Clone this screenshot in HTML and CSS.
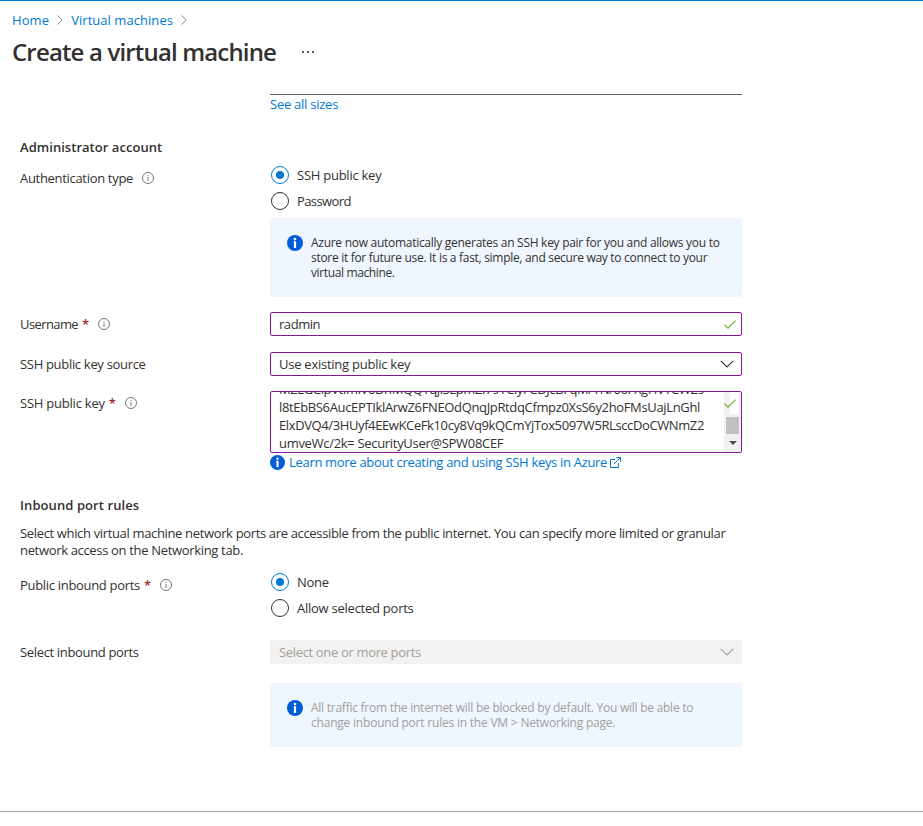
FILE: index.html
```html
<!DOCTYPE html>
<html lang="en">
<head>
<meta charset="utf-8">
<title>Create a virtual machine</title>
<link rel="stylesheet" href="styles.css">
</head>
<body>
<svg class="defs" width="0" height="0" aria-hidden="true">
  <symbol id="info" viewBox="0 0 12 12"><circle cx="6" cy="6" r="5.5" fill="none" stroke="#797775"/><path d="M6 5v4M6 3v1" stroke="#797775" fill="none"/></symbol>
  <symbol id="info-solid" viewBox="0 0 16 16"><circle cx="8" cy="8" r="8" fill="#015cda"/><circle cx="8" cy="4" r="1.3" fill="#fff"/><path d="M6.6 6.8H8" stroke="#fff"/><path d="M8 6.3v6.7" stroke="#fff" stroke-width="2.2"/></symbol>
  <symbol id="chevron" viewBox="0 0 14 8"><path d="M.8 .8 7 7 13.2 .8" fill="none" stroke="currentColor" stroke-width="1.1"/></symbol>
  <symbol id="check" viewBox="0 0 12 9"><path d="M.4 4.6 4 8.1 11.6.6" fill="none" stroke="#6bb12e" stroke-width="1.2"/></symbol>
  <symbol id="crumb" viewBox="0 0 6 10"><path d="M.5.5 5.3 5 .5 9.5" fill="none" stroke="#8a8886"/></symbol>
</svg>
<header class="header">
  <nav class="crumbs">
    <a class="t crumb-home">Home</a><svg class="sep"><use href="#crumb"/></svg>
    <a class="t crumb-vm">Virtual machines</a><svg class="sep"><use href="#crumb"/></svg>
  </nav>
  <div class="title-row"><h1 class="t">Create a virtual machine</h1><span class="more"><i></i><i></i><i></i></span></div>
</header>
<main class="form">
  <div class="row size-row"><div class="field"><div class="cut-field"></div><a class="t see-all">See all sizes</a></div></div>

  <h2 class="t admin-title">Administrator account</h2>
  <div class="row auth-row">
    <div class="label"><span class="t l-auth">Authentication type</span><svg class="info"><use href="#info"/></svg></div>
    <div class="field">
      <div class="radio on"><span class="dot"></span><span class="t r-ssh">SSH public key</span></div>
      <div class="radio"><span class="dot"></span><span class="t r-pass">Password</span></div>
      <div class="note note-key"><svg class="solid"><use href="#info-solid"/></svg>
        <p><span class="t n1">Azure now automatically generates an SSH key pair for you and allows you to</span><span class="t n2">store it for future use. It is a fast, simple, and secure way to connect to your</span><span class="t n3">virtual machine.</span></p></div>
    </div>
  </div>
  <div class="row user-row">
    <div class="label"><span class="t l-user">Username</span><b class="req">*</b><svg class="info"><use href="#info"/></svg></div>
    <div class="field"><div class="box"><span class="t v-user">radmin</span><svg class="check"><use href="#check"/></svg></div></div>
  </div>
  <div class="row source-row">
    <div class="label"><span class="t l-source">SSH public key source</span></div>
    <div class="field"><div class="box"><span class="t v-source">Use existing public key</span><svg class="chev"><use href="#chevron"/></svg></div></div>
  </div>
  <div class="row key-row">
    <div class="label"><span class="t l-key">SSH public key</span><b class="req">*</b><svg class="info"><use href="#info"/></svg></div>
    <div class="field">
      <div class="area">
        <div class="area-text"><span class="t k0">MZLGCipVtImiV0DnMQQTqjlSLpmZI79TClyFCDJcBFqM/YN/06FXgHVTCWZ9</span><span class="t k1">l8tEbBS6AucEPTIklArwZ6FNEOdQnqJpRtdqCfmpz0XsS6y2hoFMsUajLnGhl</span><span class="t k2">ElxDVQ4/3HUyf4EEwKCeFk10cy8Vq9kQCmYjTox5097W5RLsccDoCWNmZ2</span><span class="t k3">umveWc/2k= SecurityUser@SPW08CEF</span></div>
        <div class="scroll"><span class="cover"><svg class="check"><use href="#check"/></svg></span><span class="thumb"></span><span class="down"></span></div>
      </div>
      <div class="learn"><svg class="solid"><use href="#info-solid"/></svg><a class="t learn-text">Learn more about creating and using SSH keys in Azure</a>
        <svg class="ext" viewBox="0 0 11 11"><path d="M5 2.5H.5v8h8V6M6.5.5h4v4M10.3.7 4 7" fill="none" stroke="#0078d4"/></svg></div>
    </div>
  </div>

  <h2 class="t rules-title">Inbound port rules</h2>
  <p class="desc"><span class="t d1">Select which virtual machine network ports are accessible from the public internet. You can specify more limited or granular</span><span class="t d2">network access on the Networking tab.</span></p>
  <div class="row ports-row">
    <div class="label"><span class="t l-ports">Public inbound ports</span><b class="req">*</b><svg class="info"><use href="#info"/></svg></div>
    <div class="field">
      <div class="radio on"><span class="dot"></span><span class="t r-none">None</span></div>
      <div class="radio"><span class="dot"></span><span class="t r-allow">Allow selected ports</span></div>
    </div>
  </div>
  <div class="row select-row">
    <div class="label"><span class="t l-select">Select inbound ports</span></div>
    <div class="field"><div class="box disabled"><span class="t v-select">Select one or more ports</span><svg class="chev"><use href="#chevron"/></svg></div>
      <div class="note note-ports"><svg class="solid"><use href="#info-solid"/></svg>
        <p><span class="t m1">All traffic from the internet will be blocked by default. You will be able to</span><span class="t m2">change inbound port rules in the VM &gt; Networking page.</span></p></div>
    </div>
  </div>
</main>
<footer class="footer"></footer>
</body>
</html>
```
FILE: styles.css
```css
* { box-sizing: border-box; }
body { margin: 0; height: 826px; overflow: hidden; display: flex; flex-direction: column; background: #fff; color: #323130; font: 13px/18px "Open Sans", "Noto Sans", sans-serif; border-top: 1px solid #0078d4; letter-spacing: -0.25px; }
.defs { display: none; }
h1, h2, p { margin: 0; }
svg { flex: none; display: block; }
.t { white-space: nowrap; }
a { color: #0078d4; }
.header { height: 93px; padding: 10px 12px 0; }
.crumbs { display: flex; align-items: center; height: 18px; }
.crumb-home { letter-spacing: 0.1px; }
.crumb-vm { letter-spacing: 0.05px; }
.sep { width: 6px; height: 10px; margin: 0 8px; }
.title-row { display: flex; align-items: center; height: 32px; margin-top: 7px; }
h1 { font-size: 24px; line-height: 32px; font-weight: 600; letter-spacing: -0.84px; width: 290px; }
.more { display: flex; gap: 3px; }
.more i { width: 2px; height: 2px; background: #605e5c; }
.form { flex: 1; padding-left: 20px; }
.row { display: flex; width: 722px; }
.label { width: 250px; height: 24px; display: flex; align-items: center; flex: none; }
.field { width: 472px; }
.size-row { height: 44px; padding-left: 250px; }
.cut-field { height: 1px; background: #605e5c; }
.see-all { display: block; }
h2 { font-size: 13px; line-height: 18px; font-weight: 600; }
.admin-title { letter-spacing: 0.04px; }
.rules-title { letter-spacing: 0.08px; }
.info { width: 12px; height: 12px; margin-left: 9px; }
.req { color: #a4262c; margin-left: 4px; font-weight: 600; width: 7px; }
.l-auth, .l-source, .l-ports { letter-spacing: -0.31px; }
.l-user { letter-spacing: -0.6px; }
.l-key { letter-spacing: -0.22px; }
.l-select, .v-select { letter-spacing: -0.34px; }
.v-user { letter-spacing: -0.45px; }
.r-pass { letter-spacing: -0.6px; }
.auth-row { padding-top: 7px; height: 156px; }
.auth-row .label { height: 30px; }
.radio { height: 26px; display: flex; align-items: center; gap: 8px; padding-left: 1px; margin-top: -4px; }
.auth-row .radio { margin-top: -1px; }
.radio + .radio, .auth-row .radio + .radio { margin-top: 0; }
.dot { width: 18px; height: 18px; border: 1px solid #323130; border-radius: 50%; display: grid; place-items: center; }
.on .dot { border-color: #0078d4; }
.on .dot::after { content: ""; width: 8px; height: 8px; border-radius: 50%; background: #0078d4; }
.note { background: #eff6ff; border-radius: 2px; display: flex; font-size: 12px; line-height: 15px; padding: 17px; margin-top: 4px; }
.note .solid { width: 16px; height: 16px; margin-right: 8px; }
.note p span, .desc span, .area-text span { display: block; }
.n1 { letter-spacing: -0.28px; }
.n2 { letter-spacing: -0.3px; }
.n3 { letter-spacing: -0.37px; }
.m2 { letter-spacing: -0.21px; }
.note-key { height: 79px; }
.user-row { height: 40px; }
.source-row { height: 39px; }
.box { height: 24px; border: 1px solid #881798; border-radius: 2px; display: flex; align-items: center; justify-content: space-between; padding: 0 5px 0 8px; }
.check { width: 12px; height: 9px; }
.chev { width: 14px; height: 8px; margin-right: 2px; }
.area { height: 62px; border: 1px solid #881798; border-radius: 2px; display: flex; justify-content: space-between; overflow: hidden; }
.area-text { padding-left: 8px; margin-top: -12px; }
.k0 { letter-spacing: -0.38px; }
.k1 { letter-spacing: -0.35px; }
.k2 { letter-spacing: -0.39px; }
.k3 { letter-spacing: -0.31px; }
.scroll { width: 17px; background: #f1f1f1; display: flex; flex-direction: column; align-items: center; flex: none; }
.cover { width: 17px; height: 22px; padding-top: 7px; background: linear-gradient(90deg, #f1f1f1 6px, #fff 6px 14px, #f1f1f1 14px); }
.thumb { width: 13px; height: 17px; background: #c1c1c1; margin-top: 3px; }
.down { border: 4px solid transparent; border-top-color: #505050; border-bottom: 0; margin-top: 7px; }
.learn { display: flex; align-items: center; height: 20px; margin-top: -1px; }
.learn-text { letter-spacing: -0.31px; }
.learn .solid { width: 15px; height: 15px; margin-right: 4px; }
.ext { width: 11px; height: 11px; margin-left: 3px; }
.key-row { height: 105px; }
.desc { line-height: 17px; margin-top: 11px; }
.d1 { letter-spacing: -0.346px; }
.d2 { letter-spacing: -0.33px; }
.ports-row { height: 81px; padding-top: 14px; }
.note-ports { margin-top: 19px; height: 64px; color: #a19f9d; }
.disabled { background: #f3f2f1; border-color: #f3f2f1; color: #a19f9d; }
.footer { height: 15px; border-top: 1px solid #a6a6a6; }
```
